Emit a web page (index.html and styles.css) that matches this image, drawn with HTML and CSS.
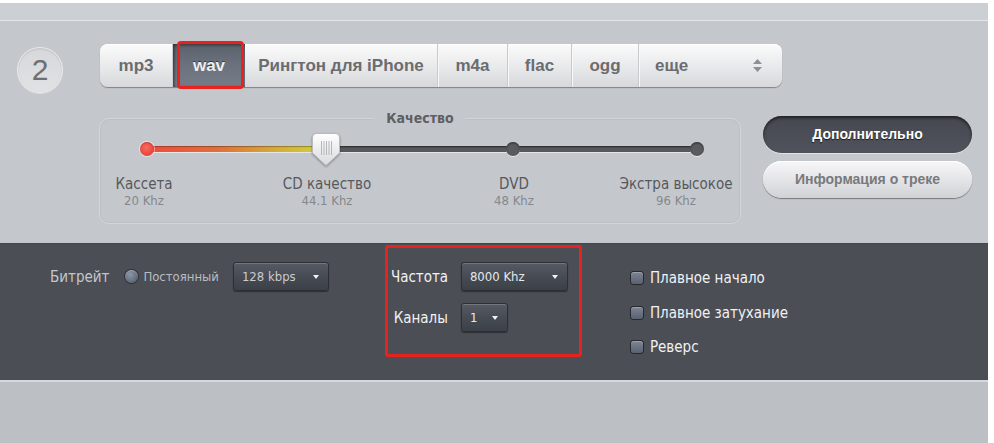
FILE: index.html
```html
<!DOCTYPE html>
<html lang="ru">
<head>
<meta charset="utf-8">
<title>Конвертер</title>
<link rel="stylesheet" href="styles.css">
</head>
<body>
<div class="page">
  <div class="topstrip"></div>
  <div class="main">
    <div class="row-format">
      <div class="step">2</div>
      <div class="tabs">
        <div class="tab t-mp3">mp3</div>
        <div class="tab t-wav active">wav</div>
        <div class="tab t-ring">Рингтон для iPhone</div>
        <div class="tab t-m4a">m4a</div>
        <div class="tab t-flac">flac</div>
        <div class="tab t-ogg">ogg</div>
        <div class="tab t-more">еще
          <svg class="updown" width="9" height="13" viewBox="0 0 9 13"><path d="M4.5 0 L9 5 H0 Z M0 8 H9 L4.5 13 Z" fill="#8d8f93"/></svg>
        </div>
      </div>
    </div>
    <div class="row-quality">
      <div class="quality">
        <div class="quality-title">Качество</div>
        <div class="track">
          <div class="fill"></div>
          <span class="dot dot-red"></span>
          <span class="dot dot-dvd"></span>
          <span class="dot dot-max"></span>
          <svg class="thumb" width="28" height="33" viewBox="0 0 28 33">
            <defs>
              <linearGradient id="tg" x1="0" y1="0" x2="0" y2="1">
                <stop offset="0" stop-color="#ffffff"/>
                <stop offset="1" stop-color="#d9dadc"/>
              </linearGradient>
            </defs>
            <path d="M5 0.5 H23 Q27.5 0.5 27.5 5 V20 L14 32.5 L0.5 20 V5 Q0.5 0.5 5 0.5 Z" fill="url(#tg)" stroke="#b9bbbe"/>
            <path d="M9.5 8 V22 M12 8 V22 M14.5 8 V22 M17 8 V22 M19.5 8 V22" stroke="#b4b6b9" stroke-width="1"/>
          </svg>
        </div>
        <div class="stops">
          <div class="stop"><div class="stop-name">Кассета</div><div class="stop-khz">20 Khz</div></div>
          <div class="stop"><div class="stop-name">CD качество</div><div class="stop-khz">44.1 Khz</div></div>
          <div class="stop"><div class="stop-name">DVD</div><div class="stop-khz">48 Khz</div></div>
          <div class="stop"><div class="stop-name">Экстра высокое</div><div class="stop-khz">96 Khz</div></div>
        </div>
      </div>
      <div class="side-buttons">
        <div class="btn btn-dark">Дополнительно</div>
        <div class="btn btn-light">Информация о треке</div>
      </div>
    </div>
  </div>
  <div class="panel">
    <div class="bitrate">
      <span class="lbl">Битрейт</span>
      <span class="radio"></span>
      <span class="radio-lbl">Постоянный</span>
      <div class="select sel-bitrate"><span>128 kbps</span><span class="caret"></span></div>
    </div>
    <div class="freq-box">
      <span class="lbl lbl-r">Частота</span>
      <div class="select sel-freq"><span>8000 Khz</span><span class="caret"></span></div>
      <span class="lbl lbl-r">Каналы</span>
      <div class="select sel-ch"><span>1</span><span class="caret"></span></div>
    </div>
    <div class="checks">
      <label class="check"><span class="cb"></span>Плавное начало</label>
      <label class="check"><span class="cb"></span>Плавное затухание</label>
      <label class="check"><span class="cb"></span>Реверс</label>
    </div>
  </div>
  <div class="bottom"></div>
</div>
</body>
</html>
```
FILE: styles.css
```css
html, body {
  margin: 0;
  padding: 0;
  background: #ffffff;
}
body {
  font-family: "Liberation Sans", Arial, sans-serif;
}
.page {
  width: 988px;
  height: 440px;
  margin-top: 3px;
  background: #c4c8cd;
  display: flex;
  flex-direction: column;
}
.topstrip {
  height: 17px;
  background: #ccd0d4;
  border-bottom: 1px solid #e4e6e9;
}
.main {
  height: 222px;
  display: flex;
  flex-direction: column;
}
.row-format {
  display: flex;
  align-items: flex-start;
  margin-top: 23px;
}
.step {
  width: 44px;
  height: 44px;
  margin: 3px 0 0 17px;
  border-radius: 50%;
  background: linear-gradient(#d6d8db, #e0e2e4);
  border: 1px solid #e9eaec;
  box-shadow: inset 0 1px 2px rgba(0,0,0,0.12), 0 1px 0 rgba(255,255,255,0.4);
  color: #6e6f72;
  font-size: 30px;
  line-height: 44px;
  text-align: center;
}
.tabs {
  display: flex;
  margin-left: 37px;
  height: 43px;
  width: 682px;
  border-radius: 8px;
  background: linear-gradient(#fbfbfb, #e6e7e9 60%, #d7d8db);
  box-shadow: 0 1px 1px rgba(0,0,0,0.35), inset 0 1px 0 #fff;
}
.tab {
  position: relative;
  font-weight: bold;
  font-size: 17px;
  color: #6b6c6f;
  line-height: 43px;
  text-align: center;
  border-right: 1px solid #c9cacd;
  box-shadow: 1px 0 0 #f8f8f8;
  box-sizing: border-box;
}
.t-mp3 { width: 73px; }
.t-wav { width: 72px; }
.t-ring { width: 193px; }
.t-m4a { width: 70px; }
.t-flac { width: 64px; }
.t-ogg { width: 67px; }
.t-more {
  flex: 1;
  border-right: none;
  box-shadow: none;
  text-align: left;
  padding-left: 16px;
  display: flex;
  align-items: center;
  justify-content: space-between;
  padding-right: 20px;
}
.tab.active {
  background: linear-gradient(#5c626c, #6c727d 50%, #767c87);
  color: #eef0f3;
  text-shadow: 0 -1px 0 rgba(0,0,0,0.5);
  box-shadow: inset 2px 0 3px rgba(0,0,0,0.35), inset 0 2px 3px rgba(0,0,0,0.25);
  border-right: none;
}
.tab.active::after {
  content: "";
  position: absolute;
  left: 4px;
  right: 1px;
  top: -3px;
  bottom: -2px;
  border: 3px solid #e8231f;
  border-radius: 4px;
}
.updown { display: block; }

.row-quality {
  display: flex;
  margin-top: 25px;
}
.quality {
  position: relative;
  margin-left: 99px;
  width: 640px;
  height: 104px;
  border: 1px solid #d2d5d9;
  border-radius: 10px;
  box-shadow: inset 0 0 0 1px rgba(0,0,0,0.04);
}
.quality-title {
  position: absolute;
  top: -9px;
  left: 50%;
  transform: translateX(-50%);
  padding: 0 12px;
  background: #c4c8cd;
  font-family: "DejaVu Sans Condensed", "DejaVu Sans", sans-serif;
  font-weight: bold;
  font-size: 14px;
  line-height: 16px;
  color: #5d5f63;
}
.track {
  position: relative;
  margin: 27px 0 0 47px;
  width: 550px;
  height: 6px;
  border-radius: 3px;
  background: #58595d;
  box-shadow: inset 0 1px 2px rgba(0,0,0,0.6), 0 1px 0 rgba(255,255,255,0.55);
}
.fill {
  width: 180px;
  height: 6px;
  border-radius: 3px;
  background: linear-gradient(90deg, #ee4b3e, #e0703a 40%, #d6a83a 70%, #d2d53c);
  box-shadow: inset 0 1px 1px rgba(0,0,0,0.3);
}
.dot {
  position: absolute;
  top: -4px;
  width: 14px;
  height: 14px;
  border-radius: 50%;
  background: #5a5b5f;
  box-shadow: inset 0 1px 2px rgba(0,0,0,0.5), 0 1px 0 rgba(255,255,255,0.55);
}
.dot-red {
  left: -7px;
  background: radial-gradient(circle at 45% 40%, #ff6a5e, #e8433a 70%);
  box-shadow: 0 0 0 1px rgba(255,255,255,0.5), inset 0 1px 1px rgba(0,0,0,0.2);
}
.dot-dvd { left: 359px; }
.dot-max { left: 543px; }
.thumb {
  position: absolute;
  left: 165px;
  top: -13px;
  filter: drop-shadow(0 1px 1px rgba(0,0,0,0.35));
}
.stops {
  display: grid;
  grid-template-columns: 88px 278px 96px 178px;
  margin-top: 24px;
  font-family: "DejaVu Sans Condensed", "DejaVu Sans", sans-serif;
  text-align: center;
}
.stops .stop:last-child { margin-right: -50px; }
.stop-name {
  font-size: 15px;
  line-height: 17px;
  color: #56585c;
}
.stop-khz {
  font-size: 13px;
  line-height: 16px;
  color: #85878b;
}
.side-buttons {
  display: flex;
  flex-direction: column;
  gap: 8px;
  margin: -2px 0 0 22px;
}
.btn {
  width: 209px;
  height: 37px;
  border-radius: 19px;
  box-sizing: border-box;
  font-weight: bold;
  font-size: 14px;
  line-height: 37px;
  text-align: center;
}
.btn-dark {
  background: linear-gradient(#454850, #50535b);
  color: #ffffff;
  text-shadow: 0 1px 1px rgba(0,0,0,0.7);
  box-shadow: inset 0 2px 3px rgba(0,0,0,0.55), 0 1px 0 rgba(255,255,255,0.5);
}
.btn-light {
  background: linear-gradient(#f7f7f8, #e2e3e5 55%, #d0d2d5);
  color: #78797c;
  box-shadow: 0 1px 1px rgba(0,0,0,0.4), inset 0 1px 0 #fff;
}

.panel {
  height: 137px;
  background: #4b4e55;
  box-shadow: inset 0 1px 0 #43464c;
  display: flex;
  align-items: flex-start;
  font-family: "DejaVu Sans Condensed", "DejaVu Sans", sans-serif;
}
.bitrate {
  display: flex;
  align-items: center;
  margin: 19px 0 0 50px;
}
.lbl {
  font-size: 15px;
  color: #c4c6ca;
}
.radio {
  width: 13px;
  height: 13px;
  margin-left: 16px;
  border-radius: 50%;
  background: radial-gradient(circle at 40% 35%, #8b96a6, #5d6878 70%);
  box-shadow: 0 0 0 1px #2e3137, inset 0 1px 1px rgba(255,255,255,0.3);
}
.radio-lbl {
  margin-left: 5px;
  font-size: 13px;
  color: #b9bcc0;
}
.select {
  display: flex;
  align-items: center;
  justify-content: space-between;
  height: 29px;
  box-sizing: border-box;
  padding: 0 9px 0 8px;
  border-radius: 3px;
  border: 1px solid #2c2f35;
  background: linear-gradient(#565b63, #474b53 50%, #3c4047);
  box-shadow: inset 0 1px 0 rgba(255,255,255,0.18), 0 1px 1px rgba(0,0,0,0.4);
  font-size: 13px;
  color: #e6e8eb;
}
.caret {
  width: 0;
  height: 0;
  border-left: 3px solid transparent;
  border-right: 3px solid transparent;
  border-top: 4px solid #f2f2f2;
}
.sel-bitrate {
  width: 96px;
  margin-left: 14px;
  color: #c9ccd0;
}
.freq-box {
  display: grid;
  grid-template-columns: 57px 107px;
  column-gap: 13px;
  row-gap: 12px;
  align-items: center;
  align-content: start;
  width: 197px;
  height: 112px;
  box-sizing: border-box;
  margin: 2px 0 0 56px;
  padding: 14px 0 0 3px;
  border: 3px solid #e8231f;
  border-radius: 3px;
}
.lbl-r {
  text-align: right;
  color: #f1f2f4;
}
.sel-freq { width: 107px; }
.sel-ch { width: 47px; }
.checks {
  display: flex;
  flex-direction: column;
  gap: 14.5px;
  margin: 25px 0 0 49px;
}
.check {
  display: flex;
  align-items: center;
  height: 20px;
  font-size: 15px;
  color: #f0f1f3;
}
.cb {
  width: 12px;
  height: 12px;
  margin-right: 7px;
  border-radius: 3px;
  background: linear-gradient(#7c8593, #5a6271);
  box-shadow: 0 0 0 1px #25282d, inset 0 1px 0 rgba(255,255,255,0.25);
}
.bottom {
  flex: 1;
  background: #bcc0c5;
  border-top: 2px solid #d5d8dc;
}
```
